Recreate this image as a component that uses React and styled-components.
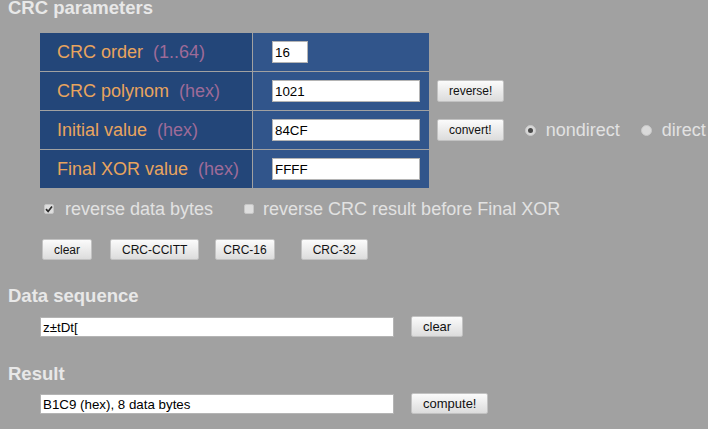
import React from 'react';
import styled, { createGlobalStyle } from 'styled-components';

const GlobalStyle = createGlobalStyle`
    html, body {
        margin: 0;
        padding: 0;
        background-color: #a1a1a1;
        font-family: "Liberation Sans", Arial, sans-serif;
    }
`;

const Page = styled.div`
    padding: 0 8px;
    overflow: hidden;
    height: 429px;
`;

const Heading = styled.h2`
    margin: ${(p) => p.$top}px 0 0;
    font-size: 18.5px;
    line-height: 16px;
    font-weight: bold;
    color: #e8e8e8;
`;

const Section = styled.div`
    padding-left: 32px;
`;

const ParamGrid = styled.div`
    display: grid;
    grid-template-columns: 212px 176px auto;
    grid-auto-rows: 38px;
    gap: 1px;
    margin-top: 17px;
`;

const LabelCell = styled.div`
    display: flex;
    align-items: center;
    padding-left: 17px;
    background-color: #234679;
    color: #e8a45e;
    font-size: 18px;
    white-space: pre;
`;

const Hint = styled.span`
    color: #9e6b98;
`;

const ValueCell = styled.div`
    display: flex;
    align-items: center;
    padding-left: 19px;
    background-color: #31558b;
`;

const ExtraCell = styled.div`
    display: flex;
    align-items: center;
    padding-left: 7px;
`;

const TextInput = styled.input`
    box-sizing: border-box;
    width: ${(p) => p.$width}px;
    height: ${(p) => p.$height || 22}px;
    padding: 1px 2px 0;
    border: 1px solid #b4b4b4;
    background: #fff;
    color: #000;
    font-family: "Liberation Sans", Arial, sans-serif;
    font-size: 13.33px;
    outline: none;
`;

const Button = styled.button`
    box-sizing: border-box;
    height: ${(p) => p.$height || 21}px;
    margin-left: ${(p) => p.$space || 0}px;
    padding: 0 ${(p) => p.$pad || 11}px;
    border: 1px solid #c2c2c2;
    border-radius: 2px;
    background: linear-gradient(#fbfbfb, #dcdcdc);
    color: #111;
    font-family: "Liberation Sans", Arial, sans-serif;
    font-size: ${(p) => p.$size || 12}px;
    cursor: pointer;
`;

const Choice = styled.label`
    display: flex;
    align-items: center;
    margin-left: ${(p) => p.$space || 0}px;
    color: #e2e2e2;
    font-size: 18px;
    white-space: nowrap;
`;

const Box = styled.span`
    box-sizing: border-box;
    display: inline-flex;
    align-items: center;
    justify-content: center;
    width: 10px;
    height: 10px;
    margin-right: ${(p) => p.$gap}px;
    border: 1px solid #c6c6c6;
    border-radius: 2px;
    background-color: #dedede;
`;

const Radio = styled.span`
    box-sizing: border-box;
    display: inline-flex;
    align-items: center;
    justify-content: center;
    width: 11px;
    height: 11px;
    margin-right: 10px;
    border: 1px solid #c8c8c8;
    border-radius: 50%;
    background-color: #d9d9d9;

    &::after {
        content: '';
        width: 5px;
        height: 5px;
        border-radius: 50%;
        background-color: ${(p) => (p.$on ? '#4a4a4a' : 'transparent')};
    }
`;

const CheckRow = styled.div`
    display: flex;
    align-items: center;
    height: 20px;
    margin-top: 11px;
    padding-left: 4px;
`;

const ButtonRow = styled.div`
    display: flex;
    align-items: center;
    margin-top: ${(p) => p.$top}px;
    padding-left: ${(p) => p.$indent || 0}px;
`;

const Check = ({ checked, gap, children, space }) => (
    <Choice $space={space}>
        <Box $gap={gap}>
            {checked ? (
                <svg width="8" height="8" viewBox="0 0 8 8">
                    <path d="M1 4.2 L3.1 6.4 L7 1.4" fill="none" stroke="#2a2a2a" strokeWidth="1.7" />
                </svg>
            ) : null}
        </Box>
        {children}
    </Choice>
);

const rows = [
    { label: 'CRC order', hint: '(1..64)', value: '16', width: 36 },
    { label: 'CRC polynom', hint: '(hex)', value: '1021', width: 148, button: 'reverse!' },
    { label: 'Initial value', hint: '(hex)', value: '84CF', width: 148, button: 'convert!', radios: true },
    { label: 'Final XOR value', hint: '(hex)', value: 'FFFF', width: 148 },
];

const App = () => {
    return (
        <Page>
            <GlobalStyle />
            <Heading $top={0}>CRC parameters</Heading>
            <Section>
                <ParamGrid>
                    {rows.map((r) => (
                        <React.Fragment key={r.label}>
                            <LabelCell>
                                {r.label}  <Hint>{r.hint}</Hint>
                            </LabelCell>
                            <ValueCell>
                                <TextInput $width={r.width} defaultValue={r.value} />
                            </ValueCell>
                            <ExtraCell>
                                {r.button ? <Button $height={22}>{r.button}</Button> : null}
                                {r.radios ? (
                                    <>
                                        <Choice $space={21}><Radio $on />nondirect</Choice>
                                        <Choice $space={21}><Radio />direct</Choice>
                                    </>
                                ) : null}
                            </ExtraCell>
                        </React.Fragment>
                    ))}
                </ParamGrid>
                <CheckRow>
                    <Check checked gap={11}>reverse data bytes</Check>
                    <Check gap={9} space={31}>reverse CRC result before Final XOR</Check>
                </CheckRow>
                <ButtonRow $top={20} $indent={2}>
                    <Button>clear</Button>
                    <Button $space={18}>CRC-CCITT</Button>
                    <Button $space={16} $pad={7}>CRC-16</Button>
                    <Button $space={26}>CRC-32</Button>
                </ButtonRow>
            </Section>
            <Heading $top={28}>Data sequence</Heading>
            <Section>
                <ButtonRow $top={12}>
                    <TextInput $width={354} $height={20} defaultValue="z±tDt[" />
                    <Button $space={17} $size={13}>clear</Button>
                </ButtonRow>
            </Section>
            <Heading $top={29}>Result</Heading>
            <Section>
                <ButtonRow $top={11}>
                    <TextInput $width={354} $height={20} defaultValue="B1C9 (hex), 8 data bytes" />
                    <Button $space={17} $size={13}>compute!</Button>
                </ButtonRow>
            </Section>
        </Page>
    );
};

export default App;
